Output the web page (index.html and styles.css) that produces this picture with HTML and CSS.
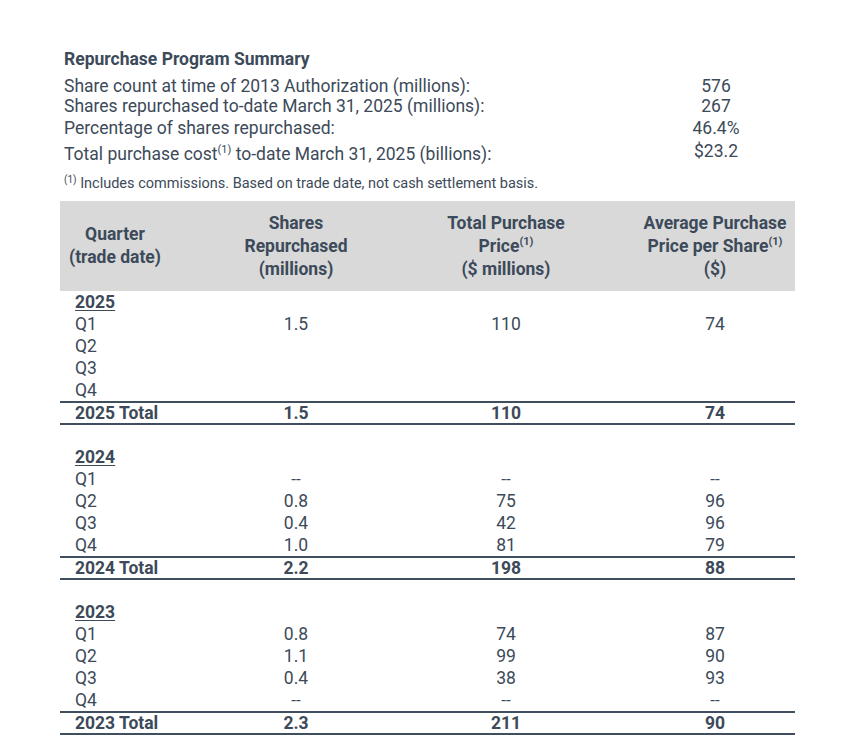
FILE: index.html
```html
<!DOCTYPE html>
<html>
<head>
<meta charset="utf-8">
<link rel="stylesheet" href="styles.css">
</head>
<body>
<div class="page">
  <section class="summary">
    <h2 class="title">Repurchase Program Summary</h2>
    <div class="srow r1"><span>Share count at time of 2013 Authorization (millions):</span><span class="sval">576</span></div>
    <div class="srow r2"><span>Shares repurchased to-date March 31, 2025 (millions):</span><span class="sval">267</span></div>
    <div class="srow r3"><span>Percentage of shares repurchased:</span><span class="sval">46.4%</span></div>
    <div class="srow r4"><span>Total purchase cost<sup>(1)</sup> to-date March 31, 2025 (billions):</span><span class="sval up">$23.2</span></div>
    <p class="note"><sup>(1)</sup> Includes commissions. Based on trade date, not cash settlement basis.</p>
  </section>

  <div class="table">
    <div class="row head">
      <div class="cell c1">Quarter<br>(trade date)</div>
      <div class="cell c2">Shares<br>Repurchased<br>(millions)</div>
      <div class="cell c3">Total Purchase<br>Price<sup>(1)</sup><br>($ millions)</div>
      <div class="cell c4">Average Purchase<br>Price per Share<sup>(1)</sup><br>($)</div>
    </div>

    <div class="row"><div class="cell c1 year">2025</div><div class="cell c2"></div><div class="cell c3"></div><div class="cell c4"></div></div>
    <div class="row"><div class="cell c1">Q1</div><div class="cell c2">1.5</div><div class="cell c3">110</div><div class="cell c4">74</div></div>
    <div class="row"><div class="cell c1">Q2</div><div class="cell c2"></div><div class="cell c3"></div><div class="cell c4"></div></div>
    <div class="row"><div class="cell c1">Q3</div><div class="cell c2"></div><div class="cell c3"></div><div class="cell c4"></div></div>
    <div class="row"><div class="cell c1">Q4</div><div class="cell c2"></div><div class="cell c3"></div><div class="cell c4"></div></div>
    <div class="row total"><div class="cell c1">2025 Total</div><div class="cell c2">1.5</div><div class="cell c3">110</div><div class="cell c4">74</div></div>
    <div class="spacer"></div>

    <div class="row"><div class="cell c1 year">2024</div><div class="cell c2"></div><div class="cell c3"></div><div class="cell c4"></div></div>
    <div class="row"><div class="cell c1">Q1</div><div class="cell c2 dash">--</div><div class="cell c3 dash">--</div><div class="cell c4 dash">--</div></div>
    <div class="row"><div class="cell c1">Q2</div><div class="cell c2">0.8</div><div class="cell c3">75</div><div class="cell c4">96</div></div>
    <div class="row"><div class="cell c1">Q3</div><div class="cell c2">0.4</div><div class="cell c3">42</div><div class="cell c4">96</div></div>
    <div class="row"><div class="cell c1">Q4</div><div class="cell c2">1.0</div><div class="cell c3">81</div><div class="cell c4">79</div></div>
    <div class="row total"><div class="cell c1">2024 Total</div><div class="cell c2">2.2</div><div class="cell c3">198</div><div class="cell c4">88</div></div>
    <div class="spacer"></div>

    <div class="row"><div class="cell c1 year">2023</div><div class="cell c2"></div><div class="cell c3"></div><div class="cell c4"></div></div>
    <div class="row"><div class="cell c1">Q1</div><div class="cell c2">0.8</div><div class="cell c3">74</div><div class="cell c4">87</div></div>
    <div class="row"><div class="cell c1">Q2</div><div class="cell c2">1.1</div><div class="cell c3">99</div><div class="cell c4">90</div></div>
    <div class="row"><div class="cell c1">Q3</div><div class="cell c2">0.4</div><div class="cell c3">38</div><div class="cell c4">93</div></div>
    <div class="row"><div class="cell c1">Q4</div><div class="cell c2 dash">--</div><div class="cell c3 dash">--</div><div class="cell c4 dash">--</div></div>
    <div class="row total"><div class="cell c1">2023 Total</div><div class="cell c2">2.3</div><div class="cell c3">211</div><div class="cell c4">90</div></div>
  </div>
</div>
</body>
</html>
```

FILE: styles.css
```css
html, body {
  margin: 0;
  padding: 0;
  background: #ffffff;
}

body {
  font-family: Roboto, "Liberation Sans", sans-serif;
  color: #3c4a59;
}

.page {
  padding: 49px 0 0 60px;
  width: 735px;
}

.summary {
  padding-left: 4px;
}

.title {
  margin: 0;
  font-size: 17.5px;
  line-height: 20px;
  font-weight: 700;
}

.srow {
  display: grid;
  grid-template-columns: 580px 144px;
  font-size: 17.5px;
  line-height: 20px;
}

.srow.r1 { margin-top: 7px; }
.srow.r2 { margin-top: 0; }
.srow.r3 { margin-top: 2px; }
.srow.r4 { margin-top: 6px; }

.sval {
  text-align: center;
}

.sval.up {
  position: relative;
  top: -3px;
}

sup {
  font-size: 11px;
  line-height: 0;
  vertical-align: 7px;
}

.note {
  margin: 12px 0 0 0;
  font-size: 14.5px;
  line-height: 16px;
}

.note sup {
  font-size: 10px;
  vertical-align: 5px;
}

.table {
  margin-top: 9px;
  display: flex;
  flex-direction: column;
}

.row {
  display: grid;
  grid-template-columns: 110px 252px 168px 205px;
  font-size: 17.5px;
  line-height: 22px;
  height: 22px;
}

.cell {
  text-align: center;
}

.cell.c1 {
  text-align: left;
  padding-left: 15px;
}

.cell.c4 {
  padding-left: 45px;
}

.head {
  height: 90px;
  background: #d9d9d9;
  align-items: center;
  font-weight: 700;
  line-height: 23px;
}

.head .cell.c1 {
  text-align: center;
  padding-left: 0;
}

.year {
  font-weight: 700;
  text-decoration: underline;
  text-underline-offset: 2px;
  text-decoration-thickness: 1px;
}

.dash {
  font-size: 17px;
}

.total {
  height: 20px;
  line-height: 20px;
  font-weight: 700;
  border-top: 2px solid #3f4f5f;
  border-bottom: 2px solid #3f4f5f;
}

.spacer {
  height: 21px;
}
```
